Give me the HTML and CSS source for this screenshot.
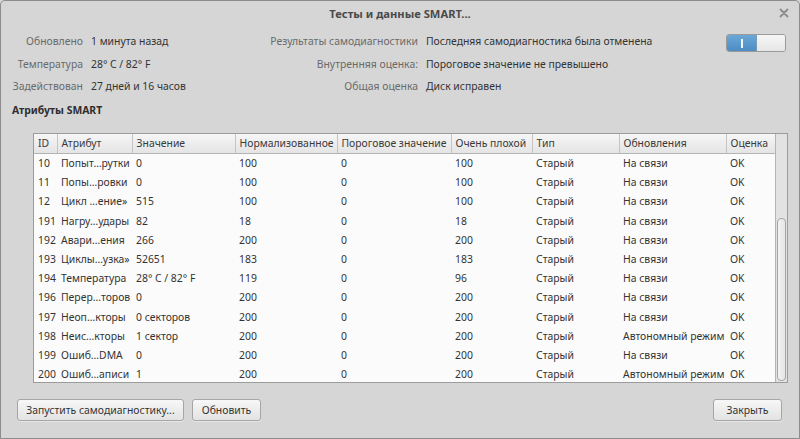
FILE: index.html
```html
<!DOCTYPE html>
<html lang="ru">
<head>
<meta charset="utf-8">
<title>Тесты и данные SMART...</title>
<link rel="stylesheet" href="styles.css">
</head>
<body>
<div class="window">
  <div class="titlebar">
    <span></span>
    <span class="title">Тесты и данные SMART...</span>
    <span class="close">
      <svg width="10" height="10" viewBox="0 0 10 10"><path d="M1.5 1.5 L8.5 8.5 M8.5 1.5 L1.5 8.5" stroke="#8a8a8a" stroke-width="1.8" stroke-linecap="round"/></svg>
    </span>
  </div>

  <div class="info">
    <div class="lbl">Обновлено</div>
    <div class="val">1 минута назад</div>
    <div class="lbl">Результаты самодиагностики</div>
    <div class="val">Последняя самодиагностика была отменена</div>
    <div class="toggle-cell">
      <div class="toggle"><span class="on"><span class="bar"></span></span><span class="off"></span></div>
    </div>

    <div class="lbl">Температура</div>
    <div class="val">28° C / 82° F</div>
    <div class="lbl">Внутренняя оценка:</div>
    <div class="val">Пороговое значение не превышено</div>
    <div></div>

    <div class="lbl">Задействован</div>
    <div class="val">27 дней и 16 часов</div>
    <div class="lbl">Общая оценка</div>
    <div class="val">Диск исправен</div>
    <div></div>
  </div>

  <div class="section">Атрибуты SMART</div>

  <div class="frame">
    <div class="tablewrap">
      <table>
        <colgroup>
          <col style="width:23px"><col style="width:75px"><col style="width:103px"><col style="width:102px"><col style="width:114px"><col style="width:81px"><col style="width:87px"><col style="width:107px"><col style="width:50px">
        </colgroup>
        <thead>
          <tr><th>ID</th><th>Атрибут</th><th>Значение</th><th>Нормализованное</th><th>Пороговое значение</th><th>Очень плохой</th><th>Тип</th><th>Обновления</th><th>Оценка</th></tr>
        </thead>
        <tbody>
          <tr><td>10</td><td>Попыт…рутки</td><td>0</td><td>100</td><td>0</td><td>100</td><td>Старый</td><td>На связи</td><td>OK</td></tr>
          <tr><td>11</td><td>Попы…ровки</td><td>0</td><td>100</td><td>0</td><td>100</td><td>Старый</td><td>На связи</td><td>OK</td></tr>
          <tr><td>12</td><td>Цикл …ение»</td><td>515</td><td>100</td><td>0</td><td>100</td><td>Старый</td><td>На связи</td><td>OK</td></tr>
          <tr><td>191</td><td>Нагру…удары</td><td>82</td><td>18</td><td>0</td><td>18</td><td>Старый</td><td>На связи</td><td>OK</td></tr>
          <tr><td>192</td><td>Авари…ения</td><td>266</td><td>200</td><td>0</td><td>200</td><td>Старый</td><td>На связи</td><td>OK</td></tr>
          <tr><td>193</td><td>Циклы…узка»</td><td>52651</td><td>183</td><td>0</td><td>183</td><td>Старый</td><td>На связи</td><td>OK</td></tr>
          <tr><td>194</td><td>Температура</td><td>28° C / 82° F</td><td>119</td><td>0</td><td>96</td><td>Старый</td><td>На связи</td><td>OK</td></tr>
          <tr><td>196</td><td>Перер…торов</td><td>0</td><td>200</td><td>0</td><td>200</td><td>Старый</td><td>На связи</td><td>OK</td></tr>
          <tr><td>197</td><td>Неоп…кторы</td><td>0 секторов</td><td>200</td><td>0</td><td>200</td><td>Старый</td><td>На связи</td><td>OK</td></tr>
          <tr><td>198</td><td>Неис…кторы</td><td>1 сектор</td><td>200</td><td>0</td><td>200</td><td>Старый</td><td>Автономный режим</td><td>OK</td></tr>
          <tr><td>199</td><td>Ошиб…DMA</td><td>0</td><td>200</td><td>0</td><td>200</td><td>Старый</td><td>На связи</td><td>OK</td></tr>
          <tr><td>200</td><td>Ошиб…аписи</td><td>1</td><td>200</td><td>0</td><td>200</td><td>Старый</td><td>Автономный режим</td><td>OK</td></tr>
        </tbody>
      </table>
    </div>
    <div class="scrollbar"><div class="thumb"></div></div>
  </div>

  <div class="buttons">
    <button class="btn btn-run">Запустить самодиагностику...</button>
    <button class="btn btn-refresh">Обновить</button>
    <span class="spacer"></span>
    <button class="btn btn-close">Закрыть</button>
  </div>
</div>
</body>
</html>
```

FILE: styles.css
```css
* { box-sizing: border-box; }
html, body {
  margin: 0;
  padding: 0;
  background: #d6d6d6;
}
body {
  font-family: "Noto Sans", "Open Sans", sans-serif;
  font-size: 10.4px;
  color: #3a3a3a;
}
.window {
  width: 800px;
  height: 439px;
  background: #d6d6d6;
  border: 1px solid #8c8c8c;
  border-radius: 5px 5px 0 0;
  display: flex;
  flex-direction: column;
  overflow: hidden;
}
.titlebar {
  height: 23px;
  display: grid;
  grid-template-columns: 1fr auto 1fr;
  align-items: center;
}
.title {
  font-weight: bold;
  font-size: 11.2px;
  color: #4a4a4a;
  padding-top: 2px;
}
.close {
  justify-self: end;
  margin-right: 10px;
  display: flex;
  align-items: center;
}
.info {
  display: grid;
  grid-template-columns: 82px 140px 179px 292px 60px;
  column-gap: 8px;
  grid-auto-rows: 22.5px;
  align-items: center;
  padding-top: 6px;
}
.lbl {
  text-align: right;
  color: #6a6a6a;
  white-space: nowrap;
}
.val {
  color: #333;
  white-space: nowrap;
}
.toggle-cell {
  display: flex;
  align-items: center;
  padding-top: 4px;
}
.toggle {
  width: 60px;
  height: 18px;
  border: 1px solid #9a9a9a;
  border-radius: 3px;
  display: flex;
  overflow: hidden;
}
.toggle .on {
  width: 30px;
  background: linear-gradient(#6aa8d8, #4d8cc4);
  display: flex;
  align-items: center;
  justify-content: center;
  border-right: 1px solid #7a9ab8;
}
.toggle .bar {
  width: 2px;
  height: 9px;
  background: #f4f8fc;
}
.toggle .off {
  flex: 1;
  background: linear-gradient(#f6f6f6, #e6e6e6);
}
.section {
  font-weight: bold;
  color: #2e2e2e;
  margin-top: 4px;
  padding-left: 11px;
  height: 17px;
  line-height: 17px;
}
.frame {
  margin: 14px 11px 0 32px;
  height: 250px;
  border: 1px solid #9c9c9c;
  display: flex;
  background: #fbfbfb;
}
.tablewrap {
  flex: 1;
  overflow: hidden;
}
table {
  border-collapse: collapse;
  table-layout: fixed;
  width: 742px;
}
th {
  height: 20px;
  font-weight: normal;
  text-align: left;
  color: #3a3a3a;
  padding: 0 0 0 4px;
  background: linear-gradient(#f6f6f6, #e4e4e4);
  border-right: 1px solid #c4c4c4;
  border-bottom: 1px solid #b4b4b4;
  white-space: nowrap;
  overflow: hidden;
}
th:last-child { border-right: none; }
td {
  height: 19.2px;
  padding: 0 0 0 4px;
  white-space: nowrap;
  overflow: hidden;
  color: #333;
}
.scrollbar {
  width: 12px;
  border-left: 1px solid #b4b4b4;
  background: #e2e2e2;
  display: flex;
  flex-direction: column;
  padding: 84px 1px 1px 1px;
}
.thumb {
  flex: 1;
  border: 1px solid #a4a4a4;
  border-radius: 4px;
  background: linear-gradient(90deg, #f2f2f2, #e6e6e6);
}
.buttons {
  display: flex;
  align-items: center;
  padding: 0 17px 0 16px;
  margin-top: 16px;
}
.spacer { flex: 1; }
.btn {
  font-family: "Noto Sans", "Open Sans", sans-serif;
  font-size: 10.4px;
  color: #333;
  height: 22px;
  padding: 0 6px;
  white-space: nowrap;
  border: 1px solid #a6a6a6;
  border-radius: 3px;
  background: linear-gradient(#f7f7f7, #e3e3e3);
  box-shadow: 0 1px 0 rgba(255,255,255,0.4);
}
.btn-run { width: 167px; }
.btn-refresh { width: 69px; margin-left: 8px; }
.btn-close { width: 69px; }
```
